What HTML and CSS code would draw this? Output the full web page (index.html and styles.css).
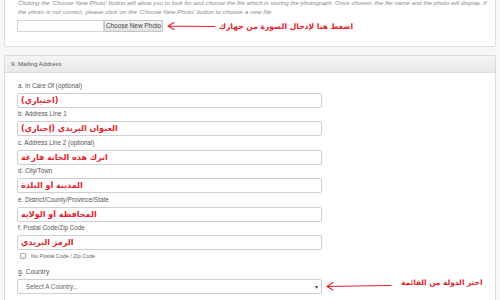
FILE: index.html
```html
<!DOCTYPE html>
<html lang="en">
<head>
    <meta charset="utf-8">
    <title>Mailing Address</title>
    <link rel="stylesheet" href="styles.css">
</head>
<body>

    <div class="panel photoPanel">
        <p class="hint"><span class="hintLine">Clicking the 'Choose New Photo' button will allow you to look for and choose the file which is storing the photograph. Once chosen, the file name and the photo will display. If</span><br>the photo is not correct, please click on the 'Choose New Photo' button to choose a new file.</p>
        <div class="fileRow">
            <div class="fileName"></div>
            <div class="fileButton">Choose New Photo</div>
            <svg class="arrow" width="50" height="10" viewBox="0 0 50 10">
                <path d="M49 5.5 L2 5 M2 5 L8 1.5 M2 5 L8 8.5" fill="none" stroke="#e5222a" stroke-width="1.1" stroke-linecap="round"/>
            </svg>
            <span class="note" dir="rtl">اضغط هنا لإدخال الصورة من جهازك</span>
        </div>
    </div>

    <div class="panel">
        <div class="panelHead">9. Mailing Address</div>
        <div class="panelBody">
            <label class="fieldLabel">a. In Care Of (optional)</label>
            <input class="field" type="text" value="(اختياري)">

            <label class="fieldLabel">b. Address Line 1</label>
            <input class="field" type="text" value="العنوان البريدي (إجباري)">

            <label class="fieldLabel">c. Address Line 2 (optional)</label>
            <input class="field" type="text" value="اترك هذه الخانة فارغة">

            <label class="fieldLabel">d. City/Town</label>
            <input class="field" type="text" value="المدينة أو البلدة">

            <label class="fieldLabel">e. District/County/Province/State</label>
            <input class="field" type="text" value="المحافظة أو الولاية">

            <label class="fieldLabel">f. Postal Code/Zip Code</label>
            <input class="field" type="text" value="الرمز البريدي">

            <div class="checkRow">
                <span class="checkBox"></span>
                <span>No Postal Code / Zip Code</span>
            </div>

            <label class="fieldLabel countryLabel">g. Country</label>
            <div class="selectRow">
                <div class="select">
                    <span>Select A Country...</span>
                    <span class="caret">▾</span>
                </div>
                <svg class="arrow" width="68" height="10" viewBox="0 0 68 10">
                    <path d="M66 4.5 L2 5.5 M2 5.5 L8 1.5 M2 5.5 L8 9" fill="none" stroke="#e5222a" stroke-width="1.1" stroke-linecap="round"/>
                </svg>
                <span class="note small" dir="rtl">اختر الدولة من القائمة</span>
            </div>
        </div>
    </div>

</body>
</html>
```

FILE: styles.css
```css
* {
    margin: 0;
    padding: 0;
    box-sizing: border-box;
}

body {
    background: #f7f7f7;
    font-family: 'Liberation Sans', Arial, sans-serif;
    color: #555;
    padding: 0 4px;
    height: 300px;
    overflow: hidden;
}

.panel {
    background: #fff;
    border: 1px solid #dcdcdc;
    border-radius: 2px;
}

.photoPanel {
    margin-top: -12px;
    padding: 10px 2px 14px 13px;
}

.hint {
    font-size: 6.15px;
    line-height: 8.5px;
    font-style: italic;
    word-spacing: 0.3px;
    color: #8a8a8a;
}

.hintLine {
    white-space: nowrap;
    word-spacing: 0;
}

.fileRow {
    display: flex;
    align-items: center;
    margin-top: 4px;
    margin-left: -1px;
    height: 12px;
}

.fileName {
    width: 87px;
    height: 12px;
    border: 1px solid #d4d4d4;
    background: #fff;
}

.fileButton {
    width: 59px;
    height: 12px;
    border: 1px solid #c4c4c4;
    border-radius: 1px;
    background: linear-gradient(#f4f4f4, #e2e2e2);
    font-size: 6.4px;
    line-height: 10px;
    text-align: center;
    color: #444;
}

.arrow {
    display: block;
    margin-left: 3px;
}

.note {
    font-family: 'DejaVu Sans', sans-serif;
    font-weight: bold;
    color: #e5222a;
    font-size: 7.6px;
    margin-left: 3px;
}

.note.small {
    font-size: 7.4px;
    margin-left: 8px;
    margin-top: -8px;
}

.panel + .panel {
    margin-top: 8px;
    height: 260px;
}

.panelHead {
    height: 17px;
    line-height: 16px;
    padding-left: 6px;
    font-size: 6.2px;
    color: #555;
    background: linear-gradient(#f5f5f5, #e8e8e8);
    border-bottom: 1px solid #dcdcdc;
}

.panelBody {
    padding: 7.5px 12px 0 12px;
}

.fieldLabel {
    display: block;
    font-size: 6.3px;
    line-height: 9px;
    margin-bottom: 3px;
    padding-left: 1px;
    color: #555;
}

.field {
    display: block;
    width: 305px;
    height: 15px;
    margin-bottom: 1.5px;
    padding: 0 3px;
    border: 1px solid #cfcfcf;
    border-radius: 2px;
    background: #fff;
    font-family: 'DejaVu Sans', sans-serif;
    font-weight: bold;
    font-size: 8px;
    color: #e5222a;
    outline: none;
}

.checkRow {
    display: flex;
    align-items: center;
    gap: 5px;
    margin: 1px 0 0 3px;
    height: 8px;
    font-size: 5.4px;
    color: #666;
}

.checkBox {
    width: 6px;
    height: 6px;
    border: 1px solid #aaa;
    border-radius: 1px;
    background: linear-gradient(#fff, #e6e6e6);
}

.countryLabel {
    margin-top: 7px;
    font-size: 6.8px;
}

.selectRow {
    display: flex;
    align-items: center;
}

.select {
    width: 305px;
    height: 15px;
    display: flex;
    align-items: center;
    justify-content: space-between;
    padding: 0 3px 0 8px;
    border: 1px solid #cfcfcf;
    border-radius: 2px;
    background: #fff;
    font-size: 6.4px;
    color: #666;
}

.caret {
    font-size: 6px;
    color: #444;
}
```
